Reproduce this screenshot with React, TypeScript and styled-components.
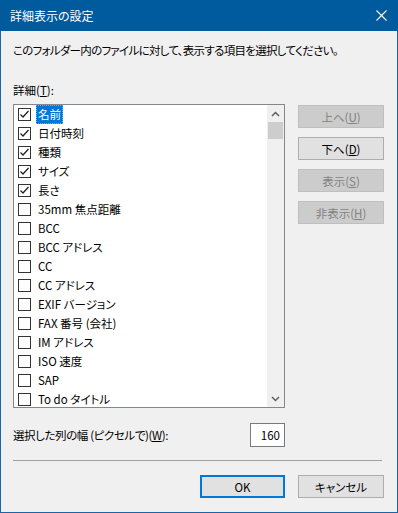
import React from "react";
import styled, { createGlobalStyle } from "styled-components";

const Global = createGlobalStyle`
  html, body { margin: 0; padding: 0; background: #f0f0f0; }
  body {
    font-family: "Noto Sans CJK JP", "Noto Sans", sans-serif;
    font-size: 11.5px;
    color: #000;
    font-feature-settings: "palt" 1;
  }
`;

const Window = styled.div`
  width: 398px;
  height: 513px;
  box-sizing: border-box;
  border: 1px solid #1a64a8;
  border-top: none;
  background: #f0f0f0;
  display: flex;
  flex-direction: column;
`;

const TitleBar = styled.div`
  height: 31px;
  margin: 0 -1px;
  background: #005a9e;
  color: #fff;
  display: flex;
  align-items: center;
  justify-content: space-between;
  padding: 0 11px 0 10px;
  font-size: 12px;
  line-height: 16px;
`;

const Title = styled.span`
  padding-top: 1px;
`;

const Content = styled.div`
  padding: 0 12px;
  display: flex;
  flex-direction: column;
`;

const Text = styled.div<{ $mt: number; $tight?: boolean }>`
  margin-top: ${(p) => p.$mt}px;
  line-height: 16px;
  white-space: nowrap;
  letter-spacing: ${(p) => (p.$tight ? "-0.7px" : "0")};
`;

const ListRow = styled.div`
  margin-top: 6px;
  display: flex;
  gap: 13px;
`;

const ListBox = styled.div`
  width: 272px;
  height: 304px;
  box-sizing: border-box;
  border: 1px solid #828790;
  background: #fff;
  display: flex;
  overflow: hidden;
`;

const Items = styled.div`
  flex: 1;
  display: flex;
  flex-direction: column;
  overflow: hidden;
`;

const Item = styled.div`
  height: 19px;
  flex: none;
  display: flex;
  align-items: center;
  padding-left: 4px;
  white-space: nowrap;
`;

const Check = styled.span`
  width: 13px;
  height: 13px;
  box-sizing: border-box;
  border: 1px solid #333;
  background: #fff;
  display: inline-flex;
  align-items: center;
  justify-content: center;
  flex: none;
`;

const Label = styled.span<{ $sel?: boolean }>`
  margin-left: 5px;
  padding: 0 2px;
  height: 19px;
  line-height: 18px;
  box-sizing: border-box;
  background: ${(p) => (p.$sel ? "#0078d7" : "transparent")};
  color: ${(p) => (p.$sel ? "#fff" : "#000")};
  outline: ${(p) => (p.$sel ? "1px dotted #f7931e" : "none")};
  outline-offset: -1px;
`;

const ScrollBar = styled.div`
  width: 17px;
  background: #f0f0f0;
  display: flex;
  flex-direction: column;
  flex: none;
`;

const Arrow = styled.div`
  height: 17px;
  display: flex;
  align-items: center;
  justify-content: center;
  flex: none;
`;

const Thumb = styled.div`
  height: 17px;
  margin: 0 1px;
  background: #cdcdcd;
  flex: none;
`;

const Track = styled.div`
  flex: 1;
`;

const Buttons = styled.div`
  display: flex;
  flex-direction: column;
  gap: 9px;
  padding-top: 1px;
`;

const Btn = styled.div<{ $disabled?: boolean; $default?: boolean; $w?: number }>`
  width: ${(p) => p.$w ?? 86}px;
  height: 23px;
  box-sizing: border-box;
  border: ${(p) => (p.$default ? "2px solid #0078d7" : p.$disabled ? "1px solid #bfbfbf" : "1px solid #adadad")};
  background: ${(p) => (p.$disabled ? "#cccccc" : "#e1e1e1")};
  color: ${(p) => (p.$disabled ? "#838383" : "#000")};
  display: flex;
  align-items: center;
  justify-content: center;
  line-height: 16px;
  white-space: nowrap;
`;

const WidthRow = styled.div`
  margin-top: 15px;
  display: flex;
  align-items: center;
  height: 24px;
`;

const WidthLabel = styled.span`
  width: 237px;
  line-height: 16px;
  white-space: nowrap;
  letter-spacing: -0.4px;
`;

const NumBox = styled.div`
  width: 35px;
  height: 24px;
  box-sizing: border-box;
  border: 1px solid #7a7a7a;
  background: #fff;
  display: flex;
  align-items: center;
  justify-content: flex-end;
  padding-right: 4px;
  line-height: 16px;
`;

const Separator = styled.div`
  margin-top: 13px;
  width: 369px;
  height: 1px;
  background: #a0a0a0;
`;

const Footer = styled.div`
  margin-top: 14px;
  display: flex;
  justify-content: flex-end;
  gap: 13px;
  padding-right: 1px;
`;

const CheckMark = () => (
  <svg width="11" height="11" viewBox="0 0 11 11">
    <path d="M1.5 5.5 L4 8 L9.5 2" fill="none" stroke="#222" strokeWidth="1.3" />
  </svg>
);

const items: [string, boolean][] = [
  ["名前", true],
  ["日付時刻", true],
  ["種類", true],
  ["サイズ", true],
  ["長さ", true],
  ["35mm 焦点距離", false],
  ["BCC", false],
  ["BCC アドレス", false],
  ["CC", false],
  ["CC アドレス", false],
  ["EXIF バージョン", false],
  ["FAX 番号 (会社)", false],
  ["IM アドレス", false],
  ["ISO 速度", false],
  ["SAP", false],
  ["To do タイトル", false],
];

export default function App() {
  return (
    <>
      <Global />
      <Window>
        <TitleBar>
          <Title>詳細表示の設定</Title>
          <svg width="11" height="11" viewBox="0 0 11 11">
            <path d="M0.5 0.5 L10.5 10.5 M10.5 0.5 L0.5 10.5" stroke="#fff" strokeWidth="1.1" />
          </svg>
        </TitleBar>
        <Content>
          <Text $mt={11} $tight>
            このフォルダー内のファイルに対して、表示する項目を選択してください。
          </Text>
          <Text $mt={24}>
            詳細(<u>T</u>):
          </Text>
          <ListRow>
            <ListBox>
              <Items>
                {items.map(([name, checked], i) => (
                  <Item key={name}>
                    <Check>{checked && <CheckMark />}</Check>
                    <Label $sel={i === 0}>{name}</Label>
                  </Item>
                ))}
              </Items>
              <ScrollBar>
                <Arrow>
                  <svg width="9" height="6" viewBox="0 0 9 6">
                    <path d="M1 5 L4.5 1.5 L8 5" fill="none" stroke="#606060" strokeWidth="1.5" />
                  </svg>
                </Arrow>
                <Thumb />
                <Track />
                <Arrow>
                  <svg width="9" height="6" viewBox="0 0 9 6">
                    <path d="M1 1 L4.5 4.5 L8 1" fill="none" stroke="#606060" strokeWidth="1.5" />
                  </svg>
                </Arrow>
              </ScrollBar>
            </ListBox>
            <Buttons>
              <Btn $disabled>
                上へ(<u>U</u>)
              </Btn>
              <Btn>
                下へ(<u>D</u>)
              </Btn>
              <Btn $disabled>
                表示(<u>S</u>)
              </Btn>
              <Btn $disabled>
                非表示(<u>H</u>)
              </Btn>
            </Buttons>
          </ListRow>
          <WidthRow>
            <WidthLabel>
              選択した列の幅 (ピクセルで)(<u>W</u>):
            </WidthLabel>
            <NumBox>160</NumBox>
          </WidthRow>
          <Separator />
          <Footer>
            <Btn $default $w={85}>OK</Btn>
            <Btn>キャンセル</Btn>
          </Footer>
        </Content>
      </Window>
    </>
  );
}
